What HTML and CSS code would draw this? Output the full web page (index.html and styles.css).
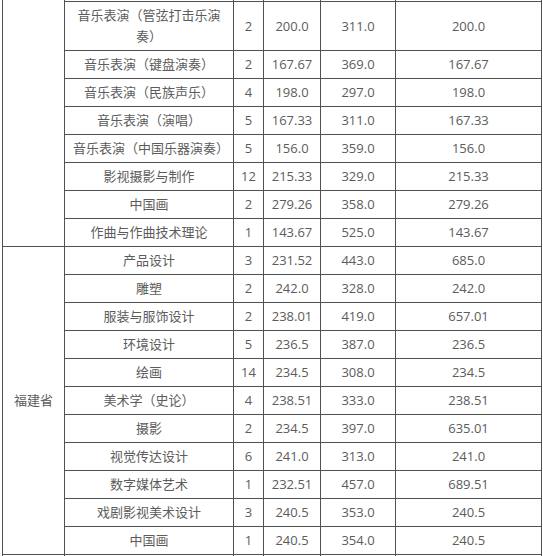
FILE: index.html
```html
<!DOCTYPE html>
<html lang="zh-CN">
<head>
<meta charset="utf-8">
<title>录取分数</title>
<link rel="stylesheet" href="styles.css">
</head>
<body>
<div class="sheet">
<table class="scores">
<colgroup>
<col class="c-prov"><col class="c-major"><col class="c-num"><col class="c-a"><col class="c-b"><col class="c-c">
</colgroup>
<tbody>
<tr class="lead"><td class="prov" rowspan="9"></td><td class="major"></td><td></td><td></td><td></td><td></td></tr>
<tr><td class="major">音乐表演（管弦打击乐演奏）</td><td>2</td><td>200.0</td><td>311.0</td><td>200.0</td></tr>
<tr><td class="major">音乐表演（键盘演奏）</td><td>2</td><td>167.67</td><td>369.0</td><td>167.67</td></tr>
<tr><td class="major">音乐表演（民族声乐）</td><td>4</td><td>198.0</td><td>297.0</td><td>198.0</td></tr>
<tr><td class="major">音乐表演（演唱）</td><td>5</td><td>167.33</td><td>311.0</td><td>167.33</td></tr>
<tr><td class="major">音乐表演（中国乐器演奏）</td><td>5</td><td>156.0</td><td>359.0</td><td>156.0</td></tr>
<tr><td class="major">影视摄影与制作</td><td>12</td><td>215.33</td><td>329.0</td><td>215.33</td></tr>
<tr><td class="major">中国画</td><td>2</td><td>279.26</td><td>358.0</td><td>279.26</td></tr>
<tr><td class="major">作曲与作曲技术理论</td><td>1</td><td>143.67</td><td>525.0</td><td>143.67</td></tr>
<tr><td class="prov" rowspan="11">福建省</td><td class="major">产品设计</td><td>3</td><td>231.52</td><td>443.0</td><td>685.0</td></tr>
<tr><td class="major">雕塑</td><td>2</td><td>242.0</td><td>328.0</td><td>242.0</td></tr>
<tr><td class="major">服装与服饰设计</td><td>2</td><td>238.01</td><td>419.0</td><td>657.01</td></tr>
<tr><td class="major">环境设计</td><td>5</td><td>236.5</td><td>387.0</td><td>236.5</td></tr>
<tr><td class="major">绘画</td><td>14</td><td>234.5</td><td>308.0</td><td>234.5</td></tr>
<tr><td class="major">美术学（史论）</td><td>4</td><td>238.51</td><td>333.0</td><td>238.51</td></tr>
<tr><td class="major">摄影</td><td>2</td><td>234.5</td><td>397.0</td><td>635.01</td></tr>
<tr><td class="major">视觉传达设计</td><td>6</td><td>241.0</td><td>313.0</td><td>241.0</td></tr>
<tr><td class="major">数字媒体艺术</td><td>1</td><td>232.51</td><td>457.0</td><td>689.51</td></tr>
<tr><td class="major">戏剧影视美术设计</td><td>3</td><td>240.5</td><td>353.0</td><td>240.5</td></tr>
<tr><td class="major">中国画</td><td>1</td><td>240.5</td><td>354.0</td><td>240.5</td></tr>
<tr class="tail"><td class="prov" rowspan="2"></td><td class="major"></td><td></td><td></td><td></td><td></td></tr>
</tbody>
</table>
</div>
</body>
</html>
```

FILE: styles.css
```css
html, body {
  margin: 0;
  padding: 0;
  background: #ffffff;
}

.sheet {
  margin: -27px 0 0 2px;
  overflow: hidden;
}

.scores {
  border-collapse: collapse;
  table-layout: fixed;
  width: 539px;
  font-family: "Open Sans", "Noto Sans CJK SC", sans-serif;
  font-size: 13px;
  line-height: 21px;
  color: #5c5c5c;
}

.c-prov { width: 62px; }
.c-major { width: 169px; }
.c-num { width: 30px; }
.c-a { width: 57px; }
.c-b { width: 75px; }
.c-c { width: 146px; }

.scores td {
  border: 1px solid #505050;
  padding: 3px 2px;
  text-align: center;
  vertical-align: middle;
  white-space: nowrap;
}

.scores td.major {
  padding: 3px 8px;
  white-space: normal;
}

.scores td.prov {
  padding: 3px 4px;
}

.lead td,
.tail td {
  height: 21px;
}
```
